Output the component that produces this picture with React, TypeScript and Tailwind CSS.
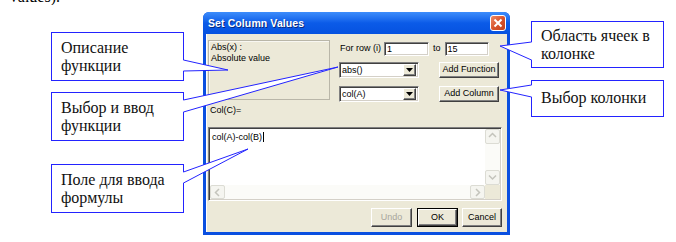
import React from 'react';

const ui = { fontFamily: '"Liberation Sans", Arial, sans-serif' };
const serif = { fontFamily: '"Liberation Serif", "Times New Roman", serif' };

const sunken =
  'border border-t-[#808080] border-l-[#808080] border-b-[#ffffff] border-r-[#ffffff] shadow-[inset_1px_1px_0_#404040,inset_-1px_-1px_0_#d4d0c8]';
const raised =
  'border border-t-[#ffffff] border-l-[#ffffff] border-b-[#404040] border-r-[#404040] shadow-[inset_-1px_-1px_0_#808080] bg-[#ece9d8]';

function Callout({ lines, className }: { lines: string[]; className: string }) {
  return (
    <div className={`bg-white border border-[#2323ff] text-[16px] leading-[18px] text-[#111] pl-[9px] ${className}`} style={serif}>
      {lines.map((l) => (
        <div key={l}>{l}</div>
      ))}
    </div>
  );
}

function Combo({ value, className }: { value: string; className: string }) {
  return (
    <div className={`bg-white ${sunken} flex items-center justify-between w-[80px] h-[16px] pl-[2px] pr-[2px] ${className}`}>
      <span className="leading-none">{value}</span>
      <div className={`${raised} w-[13px] h-[12px] flex items-center justify-center`}>
        <svg width="7" height="4" viewBox="0 0 7 4">
          <path d="M0 0h7L3.5 4z" fill="#000" />
        </svg>
      </div>
    </div>
  );
}

function Btn({ label, className, disabled }: { label: string; className: string; disabled?: boolean }) {
  return (
    <div className={`${raised} flex items-center justify-center ${disabled ? 'text-[#a7a69c]' : 'text-black'} ${className}`}>
      {label}
    </div>
  );
}

function Arrow({ dir }: { dir: 'up' | 'down' | 'left' | 'right' }) {
  const d = {
    up: 'M3 7l3.5-3.5L10 7',
    down: 'M3 4.5L6.5 8 10 4.5',
    left: 'M8 3L4.5 6.5 8 10',
    right: 'M5 3l3.5 3.5L5 10',
  }[dir];
  return (
    <div className="w-full h-full border border-[#dcdcd4] rounded-[2px] bg-[#f5f5f0] flex items-center justify-center">
      <svg width="13" height="13" viewBox="0 0 13 13">
        <path d={d} fill="none" stroke="#c4c4bc" strokeWidth="1.5" />
      </svg>
    </div>
  );
}

function Tail({ tip, b1, b2, dx }: { tip: number[]; b1: number[]; b2: number[]; dx: number }) {
  const pts = [tip, b1, [b1[0] + dx, b1[1] + 1], [b2[0] + dx, b2[1] - 1], b2].map((p) => p.join(',')).join(' ');
  return (
    <g>
      <polygon points={pts} fill="#fff" />
      <line x1={tip[0]} y1={tip[1]} x2={b1[0]} y2={b1[1]} stroke="#2323ff" strokeWidth="1" />
      <line x1={tip[0]} y1={tip[1]} x2={b2[0]} y2={b2[1]} stroke="#2323ff" strokeWidth="1" />
    </g>
  );
}

export default function App() {
  return (
    <div className="relative w-[676px] h-[242px] bg-white overflow-hidden">
      <div className="h-[5px] overflow-hidden pl-[8px]">
        <div className="-mt-[12px] text-[16px] leading-[18px] text-black" style={serif}>
          Values).
        </div>
      </div>

      <div className="flex items-start">
        {/* left callouts */}
        <div className="ml-[51px] w-[133px] flex flex-col">
          <Callout className="mt-[27px] h-[49px] pt-[6px]" lines={['Описание', 'функции']} />
          <Callout className="mt-[11px] h-[49px] pt-[6px]" lines={['Выбор и ввод', 'функции']} />
          <Callout className="mt-[23px] h-[49px] pt-[6px]" lines={['Поле для ввода', 'формулы']} />
        </div>

        {/* dialog */}
        <div className="ml-[19px] mt-[7px] w-[307px] h-[223px] bg-[#0a4fe0] rounded-t-[6px] flex flex-col px-[3px] pb-[3px]" style={ui}>
          <div className="h-[22px] -mx-[3px] rounded-t-[6px] bg-gradient-to-b from-[#3d8dfb] via-[#0b5be8] to-[#0652e0] flex items-center justify-between pl-[5px] pr-[4px]">
            <span className="text-white font-bold text-[10.5px] leading-none tracking-[0.1px] [text-shadow:1px_1px_0_#0a2a80]">Set Column Values</span>
            <div className="w-[16px] h-[16px] rounded-[3px] border border-white bg-gradient-to-br from-[#ee8a66] via-[#d9542c] to-[#c2401c] flex items-center justify-center">
              <svg width="10" height="10" viewBox="0 0 10 10">
                <path d="M1.5 1.5l7 7M8.5 1.5l-7 7" stroke="#fff" strokeWidth="2" />
              </svg>
            </div>
          </div>

          <div className="flex-1 bg-[#ece9d8] border-l border-[#ffffff] flex flex-col pl-[1px] pr-[5px] pt-[6px] text-[9px] text-black">
            <div className="flex items-start">
              <div className="w-[122px] h-[60px] border border-[#b9b6a8] shadow-[inset_1px_1px_0_#f8f7f2] pl-[2px] pt-[1px] leading-[10.5px]">
                <div>Abs(x) :</div>
                <div>Absolute value</div>
              </div>
              <div className="ml-[9px] flex-1 flex flex-col">
                <div className="flex items-center mt-[2px] h-[14px]">
                  <span className="ml-[1px]">For row (i)</span>
                  <div className={`ml-[3px] w-[45px] h-[14px] bg-white ${sunken} pl-[2px] flex items-center leading-none`}>1</div>
                  <span className="ml-[4px]">to</span>
                  <div className={`ml-[4px] w-[44px] h-[14px] bg-white ${sunken} pl-[2px] flex items-center leading-none`}>15</div>
                </div>
                <div className="flex items-center mt-[6px]">
                  <Combo value="abs()" className="" />
                  <Btn label="Add Function" className="ml-[20px] w-[60px] h-[16px]" />
                </div>
                <div className="flex items-center mt-[8px]">
                  <Combo value="col(A)" className="" />
                  <Btn label="Add Column" className="ml-[20px] w-[60px] h-[16px]" />
                </div>
              </div>
            </div>

            <div className="mt-[3px] pl-[2px] leading-[11px]">Col(C)=</div>

            <div className={`mt-[11px] w-[294px] h-[74px] bg-white ${sunken} p-[1px] grid grid-cols-[1fr_15px] grid-rows-[1fr_14px]`}>
              <div className="pl-[2px] pt-[3px] leading-[11px] flex items-start">
                <span>col(A)-col(B)</span>
                <span className="w-px h-[10px] bg-black ml-[1px]" />
              </div>
              <div className="flex flex-col bg-[#fbfbf8]">
                <div className="h-[15px]"><Arrow dir="up" /></div>
                <div className="flex-1" />
                <div className="h-[15px]"><Arrow dir="down" /></div>
              </div>
              <div className="flex bg-[#fbfbf8]">
                <div className="w-[15px]"><Arrow dir="left" /></div>
                <div className="flex-1" />
                <div className="w-[15px]"><Arrow dir="right" /></div>
              </div>
              <div className="bg-[#ece9d8]" />
            </div>

            <div className="mt-[7px] flex justify-end">
              <Btn label="Undo" disabled className="w-[41px] h-[19px]" />
              <div className="ml-[5px] w-[41px] h-[19px] border border-black">
                <Btn label="OK" className="w-full h-full" />
              </div>
              <Btn label="Cancel" className="ml-[4px] w-[40px] h-[19px]" />
            </div>
          </div>
        </div>

        {/* right callouts */}
        <div className="ml-[21px] w-[133px] flex flex-col">
          <Callout className="mt-[16px] h-[47px] pt-[5px]" lines={['Область ячеек в', 'колонке']} />
          <Callout className="mt-[12px] h-[37px] pt-[8px]" lines={['Выбор колонки']} />
        </div>
      </div>

      <svg className="absolute inset-0 pointer-events-none" width="676" height="242">
        <Tail tip={[228, 70]} b1={[183.5, 60]} b2={[183.5, 71]} dx={-1.5} />
        <Tail tip={[338, 67]} b1={[183.5, 100]} b2={[183.5, 112]} dx={-1.5} />
        <Tail tip={[248, 149]} b1={[183.5, 172]} b2={[183.5, 183]} dx={-1.5} />
        <Tail tip={[500, 46]} b1={[531.5, 42]} b2={[531.5, 60]} dx={1.5} />
        <Tail tip={[500, 90]} b1={[531.5, 85]} b2={[531.5, 97]} dx={1.5} />
      </svg>
    </div>
  );
}
